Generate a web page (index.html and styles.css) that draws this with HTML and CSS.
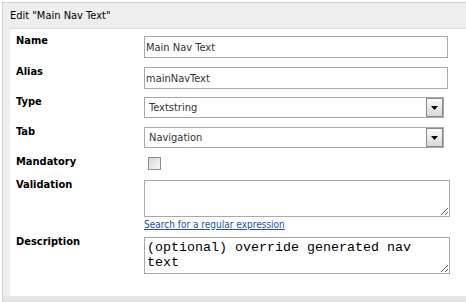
FILE: index.html
```html
<!DOCTYPE html>
<html lang="en">
<head>
  <title>Edit property</title>
  <meta name="viewport" content="width=device-width, initial-scale=1">
  <link rel="stylesheet" href="styles.css">
</head>
<body>
  <div class="box">
    <div class="box-head">Edit "Main Nav Text"</div>

    <div class="panel">
      <div class="row">
        <label class="label" for="propName">Name</label>
        <input id="propName" class="text" type="text" value="Main Nav Text">
      </div>

      <div class="row row-alias">
        <label class="label" for="propAlias">Alias</label>
        <input id="propAlias" class="text" type="text" value="mainNavText">
      </div>

      <div class="row">
        <label class="label" for="propType">Type</label>
        <div class="select">
          <select id="propType">
            <option>Textstring</option>
          </select>
          <span class="select-btn"><svg width="7" height="4" viewBox="0 0 7 4"><path d="M0 0h7L3.5 4z" fill="#000"/></svg></span>
        </div>
      </div>

      <div class="row">
        <label class="label" for="propTab">Tab</label>
        <div class="select">
          <select id="propTab">
            <option>Navigation</option>
          </select>
          <span class="select-btn"><svg width="7" height="4" viewBox="0 0 7 4"><path d="M0 0h7L3.5 4z" fill="#000"/></svg></span>
        </div>
      </div>

      <div class="row row-check">
        <label class="label" for="propMandatory">Mandatory</label>
        <div><input id="propMandatory" class="check" type="checkbox"></div>
      </div>

      <div class="row row-validation">
        <label class="label" for="propValidation">Validation</label>
        <div>
          <textarea id="propValidation" class="area"></textarea>
          <a class="regex-link" href="#">Search for a regular expression</a>
        </div>
      </div>

      <div class="row">
        <label class="label" for="propDescription">Description</label>
        <textarea id="propDescription" class="area">(optional) override generated nav text</textarea>
      </div>
    </div>

    <div class="box-foot"></div>
  </div>
</body>
</html>
```

FILE: styles.css
```css
body {
  margin: 0;
  font-family: "DejaVu Sans Condensed", "DejaVu Sans", sans-serif;
  font-size: 11px;
  color: #000;
  background-color: #fff;
  overflow: hidden;
}

.box {
  margin: 2px 0 0 2px;
  border-top: 1px solid #cfcfcf;
  border-left: 1px solid #cfcfcf;
  background-color: #eee;
}

.box-head {
  height: 25px;
  box-sizing: border-box;
  padding: 6px 7px 0;
  line-height: 13px;
}

.panel {
  margin-left: 7px;
  border-top: 1px solid #dadada;
  background-color: #fff;
  padding: 7px 0 13px 6px;
}

.box-foot {
  height: 14px;
  background: linear-gradient(#e8e8e8, #d8d8d8);
}

.row {
  display: grid;
  grid-template-columns: 128px 1fr;
  align-items: start;
  margin-bottom: 9px;
}

.row-alias {
  margin-bottom: 8px;
}

.row-check {
  margin-bottom: 10px;
}

.row-validation {
  margin-bottom: 6px;
}

.label {
  font-weight: bold;
  line-height: 13px;
  margin-top: -2px;
}

.text {
  display: block;
  width: 304px;
  height: 22px;
  box-sizing: border-box;
  margin: 0;
  padding: 0 1px;
  border: 1px solid #a9a9a9;
  font-family: inherit;
  font-size: 11px;
  color: #333;
  outline: none;
}

.select {
  display: flex;
  width: 300px;
  height: 21px;
  box-sizing: border-box;
  border: 1px solid #a9a9a9;
  background-color: #fff;
}

.select select {
  flex: 1;
  min-width: 0;
  -webkit-appearance: none;
  appearance: none;
  border: none;
  margin: 0;
  padding: 0 0 0 4px;
  background: transparent;
  font-family: inherit;
  font-size: 11px;
  color: #333;
  outline: none;
}

.select-btn {
  display: flex;
  align-items: center;
  justify-content: center;
  width: 17px;
  box-sizing: border-box;
  border: 1px solid #8a8a8a;
  background: linear-gradient(#fbfbfb, #d8d8d8);
}

.check {
  -webkit-appearance: none;
  appearance: none;
  display: block;
  width: 13px;
  height: 13px;
  margin: 0 0 0 4px;
  border: 1px solid #8e8f8f;
  background: linear-gradient(135deg, #d9d9d9, #f7f7f7);
}

.area {
  display: block;
  width: 306px;
  height: 37px;
  box-sizing: border-box;
  margin: 0;
  padding: 2px;
  border: 1px solid #a9a9a9;
  font-family: "Liberation Mono", monospace;
  font-size: 13.33px;
  color: #000;
  outline: none;
}

.regex-link {
  display: block;
  margin-top: 2px;
  font-size: 10px;
  line-height: 12px;
  color: #2350a8;
}
```
